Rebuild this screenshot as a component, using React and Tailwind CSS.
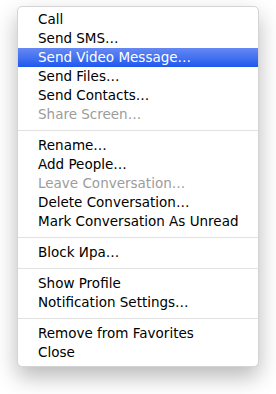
export default function App() {
  const groups = [
    [
      { t: "Call" },
      { t: "Send SMS…" },
      { t: "Send Video Message…", h: true },
      { t: "Send Files…" },
      { t: "Send Contacts…" },
      { t: "Share Screen…", d: true },
    ],
    [
      { t: "Rename…" },
      { t: "Add People…" },
      { t: "Leave Conversation…", d: true },
      { t: "Delete Conversation…" },
      { t: "Mark Conversation As Unread" },
    ],
    [{ t: "Block Ира…" }],
    [{ t: "Show Profile" }, { t: "Notification Settings…" }],
    [{ t: "Remove from Favorites" }, { t: "Close" }],
  ];
  return (
    <div className="w-[276px] h-[394px] bg-white pt-[6px] pl-[17px]" style={{ fontFamily: '"DejaVu Sans", sans-serif' }}>
      <div className="w-[242px] bg-white rounded-[5px] border border-[#d4d4d4] pt-[3px] pb-[4px] shadow-[0_10px_22px_rgba(0,0,0,0.28)] overflow-hidden">
        {groups.map((g, gi) => (
          <div key={gi}>
            {gi > 0 && (
              <div className="h-[12px] pt-[6px]">
                <div className="h-px w-full bg-[#e2e2e2]" />
              </div>
            )}
            {g.map((it, i) => (
              <div
                key={i}
                className={
                  "h-[19px] pl-[20px] text-[13.5px] leading-[19px] whitespace-nowrap " +
                  (it.h
                    ? "bg-gradient-to-b from-[#6688f2] to-[#1d58ef] text-white"
                    : it.d
                    ? "text-[#9c9c9c]"
                    : "text-black")
                }
              >
                {it.t}
              </div>
            ))}
          </div>
        ))}
      </div>
    </div>
  );
}
